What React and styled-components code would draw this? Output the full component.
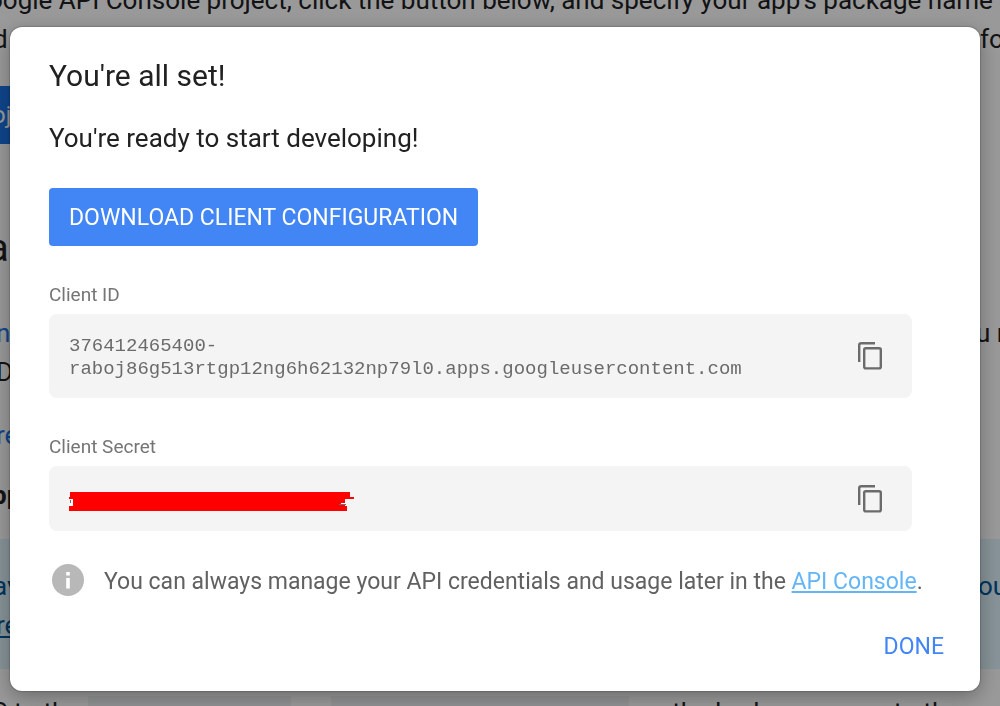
import React from 'react';
import styled, { createGlobalStyle } from 'styled-components';

const Global = createGlobalStyle`
  *, *::before, *::after { box-sizing: border-box; }
  html, body, #root { height: 100%; }
  body {
    margin: 0;
    overflow: hidden;
    background: #fff;
    color: #202124;
    font-family: Roboto, "Liberation Sans", sans-serif;
  }
  p, h1, h2, h3 { margin: 0; }
`;

const Page = styled.main`
  height: 100%;
  margin: -19px 0 0 -12px;
  font-size: 26px;
  line-height: 39px;
  white-space: nowrap;
`;

const Line = styled.div`
  display: flex;
  justify-content: space-between;
  height: 39px;
  margin-top: ${(p) => p.$gap || 0}px;
  padding-left: ${(p) => p.$indent || 0}px;
`;

const LineEnd = styled.span`
  width: ${(p) => p.$width}px;
`;

const PageLink = styled.a`
  color: ${(p) => (p.$note ? '#01579b' : '#1a73e8')};
  text-decoration: ${(p) => (p.$underline ? 'underline' : 'none')};
`;

const ProjectButton = styled.button`
  display: block;
  height: 58px;
  margin-top: 27px;
  padding: 0 20px 0 4px;
  border: 0;
  background: #1a73e8;
  color: #fff;
  font: 24px Roboto, sans-serif;
`;

const Heading = styled.h2`
  margin-top: 84px;
  padding-bottom: 6px;
  font-size: 38px;
  line-height: 40px;
  font-weight: 400;
`;

const Strong = styled.h3`
  margin-top: 21px;
  padding-left: 4px;
  font-size: 26px;
  line-height: 39px;
  font-weight: 700;
`;

const Note = styled.aside`
  height: 130px;
  margin-top: 24px;
  padding-top: 28px;
  background: #e1f5fe;
  color: #01579b;
`;

const Footline = styled.p`
  display: flex;
  gap: 8px;
  margin-top: 24px;
  padding-left: 4px;
`;

const Code = styled.code`
  width: ${(p) => p.$width}px;
  height: 32px;
  margin-top: 3px;
  background: #f1f3f4;
`;

const FootEnd = styled.span`
  margin-left: auto;
  padding-right: 40px;
`;

const Overlay = styled.div`
  position: fixed;
  inset: 0;
  display: flex;
  align-items: flex-start;
  padding: 27px 20px 15px 10px;
  background: rgba(0, 0, 0, 0.4);
`;

const Dialog = styled.section`
  flex: 1;
  padding: 29px 20px 17px 39px;
  border-radius: 12px;
  background: #fff;
  color: #212121;
  box-shadow: 0 0 2px rgba(0, 0, 0, 0.5), 0 6px 20px rgba(0, 0, 0, 0.3);
`;

const Title = styled.h1`
  font-size: 30px;
  line-height: 40px;
  font-weight: 400;
`;

const Lead = styled.p`
  margin-top: 24px;
  font-size: 26px;
  line-height: 36px;
`;

const DownloadButton = styled.button`
  display: block;
  height: 58px;
  margin-top: 32px;
  padding: 0 20px;
  border: 0;
  border-radius: 4px;
  background: #4285f4;
  color: #fff;
  font: 23px Roboto, sans-serif;
`;

const FieldLabel = styled.h2`
  margin-top: 37px;
  color: #757575;
  font-size: 19px;
  line-height: 24px;
  font-weight: 400;
`;

const Field = styled.div`
  display: flex;
  align-items: center;
  justify-content: space-between;
  min-height: 65px;
  margin: 7px 48px 0 0;
  padding: 17px 30px 17px 20px;
  border-radius: 8px;
  background: #f4f4f4;
`;

const Value = styled.code`
  padding-top: 4px;
  color: #6b6b6b;
  font: 19px/23px "Liberation Mono", monospace;
`;

const Secret = styled.div`
  display: flex;
  padding-top: 6px;
`;

const CopyButton = styled.button`
  display: flex;
  padding: 0;
  border: 0;
  background: none;
  color: #6b6b6b;
`;

const Info = styled.div`
  display: flex;
  align-items: center;
  gap: 20px;
  margin-top: 29px;
  padding-left: 3px;
  color: #616161;
  font-size: 23px;
  line-height: 36px;
`;

const InfoText = styled.p`
  padding-top: 4px;
`;

const ConsoleLink = styled.a`
  color: #64b5f6;
  text-decoration: underline;
`;

const Actions = styled.footer`
  display: flex;
  justify-content: flex-end;
  margin-top: 18px;
`;

const DoneButton = styled.button`
  height: 56px;
  padding: 0 16px;
  border: 0;
  background: none;
  color: #4285f4;
  font: 23px Roboto, sans-serif;
`;

const CopyIcon = () => (
  <svg width="24" height="28" viewBox="0 0 24 28" fill="none" stroke="currentColor" strokeWidth="2.4" aria-hidden="true">
    <path d="M1.2 20V3.2Q1.2 1.2 3.2 1.2H17" />
    <rect x="6.2" y="6.2" width="16.6" height="20.2" rx="1.6" />
  </svg>
);

const InfoIcon = () => (
  <svg width="32" height="32" viewBox="0 0 32 32" aria-hidden="true">
    <circle cx="16" cy="16" r="16" fill="#b8b8b8" />
    <path d="M14.2 8h3.6v3.4h-3.6zM14.2 14h3.6v10.4h-3.6z" fill="#fff" />
  </svg>
);

const Redaction = () => (
  <svg width="286" height="19" viewBox="0 0 286 19" shapeRendering="crispEdges" role="img" aria-label="Hidden client secret">
    <path d="M1 7H5V12H3V14H1z" fill="#fff" />
    <path d="M1 0H281V5H285V7H276V14H278V19H0V14H4V7H0V5H1z" fill="#f00" />
    <path d="M1 8h1v3h-1zM270 12h7v1h-7z" fill="#6b6b6b" />
    <path d="M272 11h4v1h-4z" fill="#fff" />
  </svg>
);

export default function App() {
  return (
    <>
      <Global />
      <Page>
        <Line>oogle API Console project, click the button below, and specify your app's package name w</Line>
        <Line $indent={5}><span>d</span><LineEnd $width={20}>fo</LineEnd></Line>
        <ProjectButton>oj</ProjectButton>
        <Heading>a</Heading>
        <Line $gap={40} $indent={8}><PageLink href="#n">n</PageLink><LineEnd $width={24}>u n</LineEnd></Line>
        <Line $indent={8}><span>D</span></Line>
        <Line $gap={24} $indent={8}><PageLink href="#re">re</PageLink></Line>
        <Strong>pp</Strong>
        <Note>
          <Line $indent={5}><span>av</span><LineEnd $width={22}>ou</LineEnd></Line>
          <Line $indent={8}><PageLink href="#note" $note $underline>re</PageLink></Line>
        </Note>
        <Footline>
          <span>S to the</span>
          <Code $width={203} />
          <span>or</span>
          <Code $width={298} />
          <span>on the body</span>
          <FootEnd>to the</FootEnd>
        </Footline>
      </Page>
      <Overlay>
        <Dialog role="dialog" aria-modal="true" aria-labelledby="dialog-title">
          <Title id="dialog-title">You're all set!</Title>
          <Lead>You're ready to start developing!</Lead>
          <DownloadButton>DOWNLOAD CLIENT CONFIGURATION</DownloadButton>
          <FieldLabel>Client ID</FieldLabel>
          <Field>
            <Value>376412465400-<br />raboj86g513rtgp12ng6h62132np79l0.apps.googleusercontent.com</Value>
            <CopyButton aria-label="Copy client ID"><CopyIcon /></CopyButton>
          </Field>
          <FieldLabel>Client Secret</FieldLabel>
          <Field>
            <Secret><Redaction /></Secret>
            <CopyButton aria-label="Copy client secret"><CopyIcon /></CopyButton>
          </Field>
          <Info>
            <InfoIcon />
            <InfoText>You can always manage your API credentials and usage later in the <ConsoleLink href="#console">API Console</ConsoleLink>.</InfoText>
          </Info>
          <Actions><DoneButton>DONE</DoneButton></Actions>
        </Dialog>
      </Overlay>
    </>
  );
}
